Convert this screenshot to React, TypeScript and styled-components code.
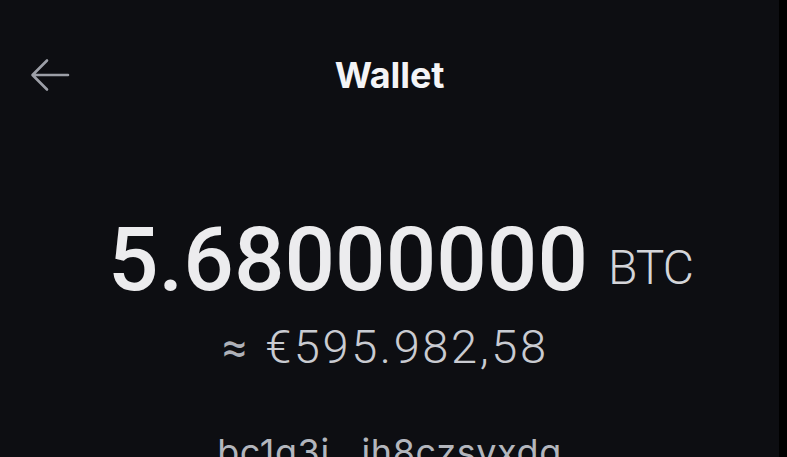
import React from 'react';
import styled, { createGlobalStyle } from 'styled-components';

// Page reset: dark page, no default margin
const GlobalStyle = createGlobalStyle`
  html, body {
    margin: 0;
    padding: 0;
    background: #000;
    overflow: hidden;
  }
`;

const Frame = styled.div`
  display: flex;
  width: 787px;
  height: 457px;
  background: #000;
`;

const Screen = styled.main`
  width: 779px;
  height: 457px;
  background: #0d0e12;
  display: flex;
  flex-direction: column;
  overflow: hidden;
  font-family: Inter, "Noto Sans", sans-serif;
`;

const Header = styled.header`
  position: relative;
  display: flex;
  align-items: center;
  justify-content: center;
  height: 46px;
  margin-top: 52px;
`;

const BackButton = styled.button`
  position: absolute;
  left: 30px;
  top: 50%;
  transform: translateY(-50%);
  display: flex;
  padding: 0;
  border: 0;
  background: none;
  cursor: pointer;
`;

const Title = styled.h1`
  margin: 0;
  font-size: 36px;
  font-weight: 700;
  line-height: 46px;
  color: #f4f4f6;
  letter-spacing: -0.1px;
`;

const Balance = styled.div`
  display: flex;
  align-items: baseline;
  justify-content: center;
  gap: 20px;
  margin-top: 117px;
  padding-left: 22px;
  font-family: Roboto, "Liberation Sans", sans-serif;
  line-height: 1;
`;

const Amount = styled.span`
  font-size: 89px;
  font-weight: 500;
  color: #ececee;
`;

const Unit = styled.span<{ $raise?: number }>`
  font-size: 48px;
  font-weight: 300;
  color: #d4d5d9;
  letter-spacing: -1px;
  position: relative;
  top: ${p => -(p.$raise ?? 0)}px;
`;

const Fiat = styled.div`
  display: flex;
  align-items: baseline;
  justify-content: center;
  gap: 18px;
  margin-top: 19px;
  padding-right: 8px;
  font-family: Roboto, "Liberation Sans", sans-serif;
  font-size: 47px;
  font-weight: 300;
  line-height: 1;
  color: #c9cbd1;
  letter-spacing: 2.6px;
`;

const Approx = styled.span`
  font-size: 44px;
  font-weight: 400;
  letter-spacing: 0;
  color: #aeb1b8;
`;

const Address = styled.div`
  margin-top: 64px;
  text-align: center;
  font-size: 36px;
  line-height: 1;
  letter-spacing: 0.6px;
  color: #b3b6bd;
  white-space: nowrap;
`;

const ArrowLeft = () => (
  <svg width="40" height="34" viewBox="0 0 40 34" fill="none">
    <path
      d="M38 17H3M17 2.5L2.5 17L17 31.5"
      stroke="#9c9fa7"
      strokeWidth="2.6"
      strokeLinecap="round"
      strokeLinejoin="round"
    />
  </svg>
);

const App: React.FC = () => {
  return (
    <Frame>
      <GlobalStyle />
      <Screen>
        <Header>
          <BackButton aria-label="Back">
            <ArrowLeft />
          </BackButton>
          <Title>Wallet</Title>
        </Header>

        <Balance>
          <Amount>5.68000000</Amount>
          <Unit $raise={6}>BTC</Unit>
        </Balance>

        <Fiat>
          <Approx>≈</Approx>
          <span>€595.982,58</span>
        </Fiat>

        <Address>bc1q3j…jh8czsyxdq</Address>
      </Screen>
    </Frame>
  );
};

export default App;
